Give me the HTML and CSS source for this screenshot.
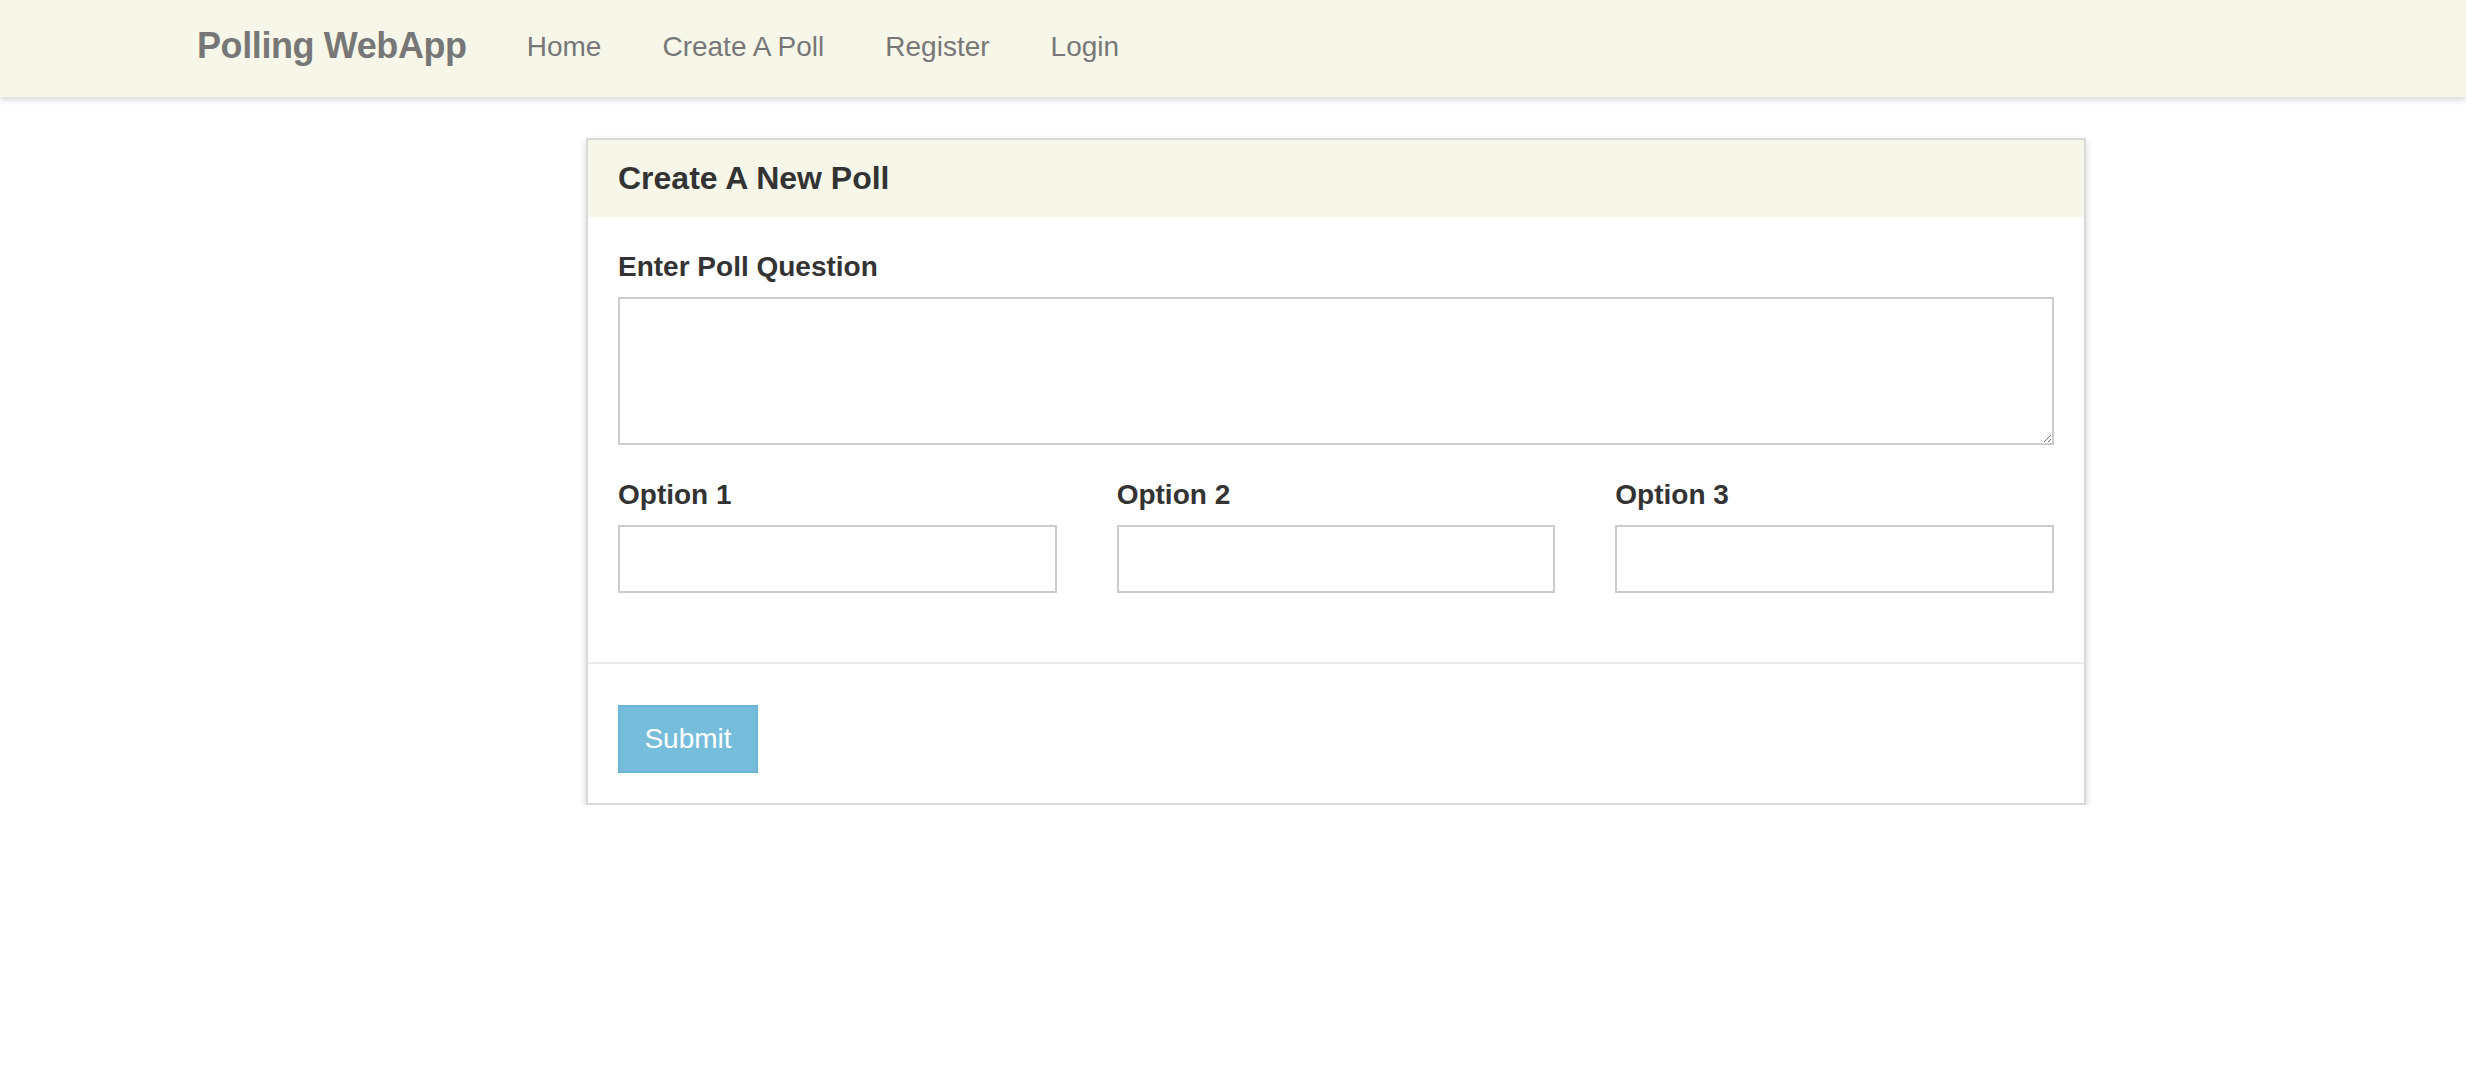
FILE: index.html
```html
<!DOCTYPE html>
<html lang="en">
<head>
<meta charset="utf-8">
<title>Polling WebApp</title>
<link rel="stylesheet" href="styles.css">
</head>
<body>
<nav class="navbar">
  <a class="brand" href="#">Polling WebApp</a>
  <ul class="nav-links">
    <li><a href="#">Home</a></li>
    <li><a href="#">Create A Poll</a></li>
    <li><a href="#">Register</a></li>
    <li><a href="#">Login</a></li>
  </ul>
</nav>
<main class="page">
  <form class="panel">
    <div class="panel-heading">
      <h3 class="panel-title">Create A New Poll</h3>
    </div>
    <div class="panel-body">
      <label class="field-label" for="question">Enter Poll Question</label>
      <textarea id="question" class="field textarea"></textarea>
      <div class="options">
        <div class="option">
          <label class="field-label" for="opt1">Option 1</label>
          <input id="opt1" class="field input" type="text">
        </div>
        <div class="option">
          <label class="field-label" for="opt2">Option 2</label>
          <input id="opt2" class="field input" type="text">
        </div>
        <div class="option">
          <label class="field-label" for="opt3">Option 3</label>
          <input id="opt3" class="field input" type="text">
        </div>
      </div>
    </div>
    <div class="panel-footer">
      <button type="button" class="btn">Submit</button>
    </div>
  </form>
</main>
</body>
</html>
```

FILE: styles.css
```css
* { box-sizing: border-box; }
html, body {
  margin: 0;
  padding: 0;
  background: #ffffff;
  font-family: "Liberation Sans", Arial, Helvetica, sans-serif;
  color: #333333;
}
.navbar {
  display: flex;
  align-items: center;
  height: 97px;
  padding-left: 197px;
  padding-bottom: 3px;
  background: #f7f7e9;
  box-shadow: 0 3px 6px rgba(0, 0, 0, 0.16);
  position: relative;
  z-index: 1;
}
.brand {
  font-size: 36px;
  font-weight: bold;
  color: #777777;
  text-decoration: none;
  margin-right: 60px;
  padding-bottom: 2px;
  letter-spacing: -0.4px;
}
.nav-links {
  display: flex;
  gap: 61px;
  list-style: none;
  margin: 0;
  padding: 0;
}
.nav-links a {
  font-size: 28px;
  color: #777777;
  text-decoration: none;
}
.page {
  padding-top: 41px;
  padding-left: 586px;
}
.panel {
  width: 1500px;
  border: 2px solid #d9d9d9;
  background: #ffffff;
  box-shadow: 0 4px 8px rgba(0, 0, 0, 0.18);
}
.panel-heading {
  display: flex;
  align-items: center;
  height: 77px;
  padding: 0 30px;
  background: #f7f7e9;
}
.panel-title {
  margin: 0;
  font-size: 32px;
  font-weight: bold;
  color: #333333;
}
.panel-body {
  padding: 30px 30px 69px;
}
.field-label {
  display: block;
  font-size: 28px;
  line-height: 40px;
  font-weight: bold;
  color: #333333;
  margin-bottom: 10px;
}
.field {
  display: block;
  width: 100%;
  border: 2px solid #cccccc;
  border-radius: 0;
  background: #ffffff;
  font-family: inherit;
  font-size: 28px;
  margin: 0;
  outline: none;
}
.textarea {
  height: 148px;
  resize: vertical;
}
.options {
  display: grid;
  grid-template-columns: repeat(3, 1fr);
  column-gap: 60px;
  margin-top: 30px;
}
.input {
  height: 68px;
}
.panel-footer {
  border-top: 2px solid #ebebeb;
  padding: 41px 30px 30px;
}
.btn {
  display: block;
  width: 140px;
  height: 68px;
  background: #76bddb;
  border: 2px solid #6ab5d6;
  border-radius: 0;
  color: #ffffff;
  font-family: inherit;
  font-size: 28px;
  padding: 0;
  cursor: pointer;
}
```
